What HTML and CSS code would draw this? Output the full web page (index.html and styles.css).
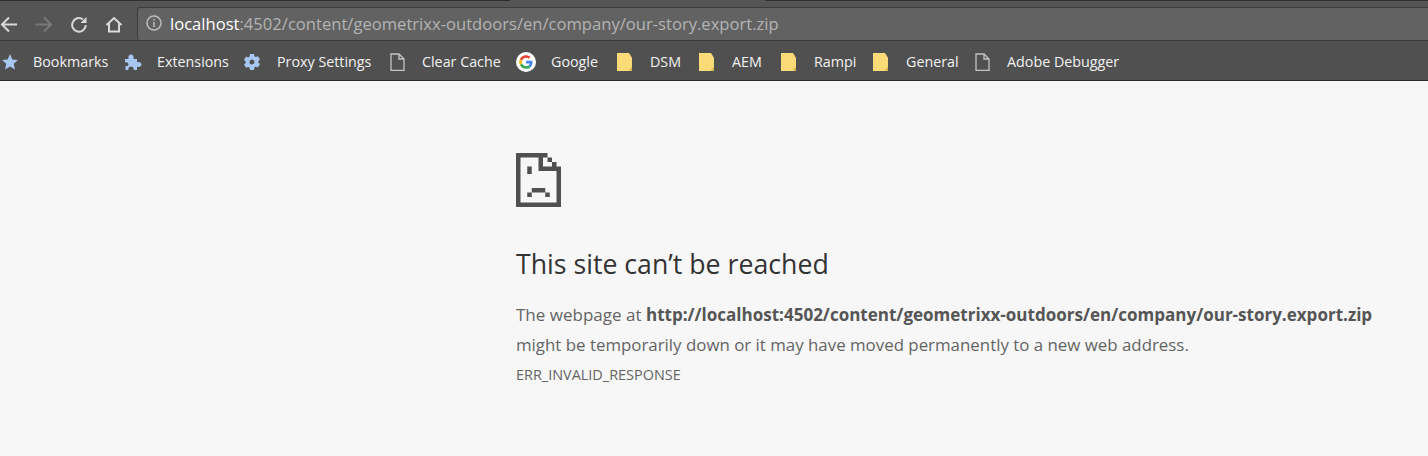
FILE: index.html
```html
<!DOCTYPE html>
<html lang="en">
<head>
<meta charset="utf-8">
<title>localhost</title>
<link rel="stylesheet" href="styles.css">
</head>
<body>
<header class="chrome">
  <div class="toolbar">
    <div class="nav">
      <svg class="nav-icon back" viewBox="0 0 18 18"><path d="M17 9.500H2M9 2.500L2 9.500l7 7"/></svg>
      <svg class="nav-icon forward" viewBox="0 0 18 18"><path d="M.5 9.500H15.500M9 2.500l7 7-7 7"/></svg>
      <svg class="nav-icon reload" viewBox="0 0 18 18"><path d="M15.800 10A6.800 6.800 0 1 1 13 4.400"/><path class="fill" d="M10.500 8H16.500V2z"/></svg>
      <svg class="nav-icon home" viewBox="0 0 18 18"><path d="M1.500 10L9 3l7.500 7M4 8v8.500h10V8"/></svg>
    </div>
    <div class="omnibox">
      <svg class="info" viewBox="0 0 16 16"><circle cx="8" cy="8" r="7"/><path d="M8 7v5M8 4v1.600"/></svg>
      <span class="url"><span class="host">localhost</span>:4502/content/geometrixx-outdoors/en/company/our-story.export.zip</span>
    </div>
  </div>
  <nav class="bookmarks">
    <a class="bm bm-star"><svg class="bm-icon" viewBox="0 0 18 18"><path class="blue" d="M9 1l2.300 5.400 5.700.5-4.300 3.800 1.300 5.800L9 13.500l-5 3 1.300-5.800L1 6.900l5.700-.5z"/></svg><span>Bookmarks</span></a>
    <a class="bm bm-ext"><svg class="bm-icon" viewBox="0 0 18 18"><path class="blue" d="M1 6h3.500C3.800 3 5.300 1.500 7 1.500S10.200 3 9.500 6H13v3.200c2.500-.8 4.500.5 4.500 2.300s-2 3.100-4.500 2.300V17H9.500c.7-2.300-.8-3.500-2.500-3.500S3.800 14.700 4.500 17H1.500v-4c2 .5 3-.5 3-1.800S3 8.800 1 9.500z"/></svg><span>Extensions</span></a>
    <a class="bm bm-gear"><svg class="bm-icon" viewBox="1 0 18 18"><path class="blue" fill-rule="evenodd" d="M7 1h4l.4 2.200 1.400.8 2.200-.8 2 3.400-1.700 1.400v1.600l1.700 1.400-2 3.400-2.200-.8-1.400.8L11 17H7l-.4-2.200-1.400-.8-2.200.8-2-3.400 1.700-1.400V8.400L1 7l2-3.400 2.200.8 1.400-.8zM9 6.500a2.500 2.500 0 1 0 0 5 2.500 2.500 0 0 0 0-5z"/></svg><span>Proxy Settings</span></a>
    <a class="bm bm-page1"><svg class="bm-icon" viewBox="0 0 18 18"><path class="sheet" d="M2 1h8l5 5v11.500H2zM10 1v5h5"/></svg><span>Clear Cache</span></a>
    <a class="bm bm-google"><svg class="bm-icon google" viewBox="0 0 20 20"><circle class="g-bg" cx="10" cy="10" r="10"/><path class="g-blue" d="M16.500 10.200c0-.5 0-1-.1-1.500H10v2.700h3.700c-.2.900-.7 1.600-1.400 2.100l2.200 1.700c1.300-1.200 2-3 2-5z"/><path class="g-green" d="M10 16.800c1.900 0 3.400-.6 4.500-1.600l-2.200-1.700c-.6.400-1.400.7-2.300.7-1.800 0-3.300-1.200-3.800-2.900l-2.300 1.800c1.100 2.200 3.400 3.700 6.100 3.700z"/><path class="g-yellow" d="M6.200 11.300c-.3-.9-.3-1.800 0-2.600L3.900 6.900c-1 1.900-1 4.300 0 6.200z"/><path class="g-red" d="M10 5.800c1 0 1.900.4 2.600 1l2-2C13.400 3.800 11.800 3.200 10 3.200c-2.700 0-5 1.500-6.100 3.700l2.300 1.800c.5-1.700 2-2.900 3.800-2.900z"/></svg><span>Google</span></a>
    <a class="bm bm-dsm"><svg class="bm-icon" viewBox="0 0 18 18"><path class="folder" d="M0 0h11c1 0 1.500.5 2 1.500L15 5v13H0z"/><path class="folder-fold" d="M12.500 18v-2.500H14V14h1v4z"/></svg><span>DSM</span></a>
    <a class="bm bm-aem"><svg class="bm-icon" viewBox="0 0 18 18"><path class="folder" d="M0 0h11c1 0 1.500.5 2 1.500L15 5v13H0z"/><path class="folder-fold" d="M12.500 18v-2.500H14V14h1v4z"/></svg><span>AEM</span></a>
    <a class="bm bm-rampi"><svg class="bm-icon" viewBox="0 0 18 18"><path class="folder" d="M0 0h11c1 0 1.500.5 2 1.500L15 5v13H0z"/><path class="folder-fold" d="M12.500 18v-2.500H14V14h1v4z"/></svg><span>Rampi</span></a>
    <a class="bm bm-general"><svg class="bm-icon" viewBox="0 0 18 18"><path class="folder" d="M0 0h11c1 0 1.500.5 2 1.500L15 5v13H0z"/><path class="folder-fold" d="M12.500 18v-2.500H14V14h1v4z"/></svg><span>General</span></a>
    <a class="bm bm-page2"><svg class="bm-icon" viewBox="0 0 18 18"><path class="sheet" d="M2 1h8l5 5v11.500H2zM10 1v5h5"/></svg><span>Adobe Debugger</span></a>
  </nav>
</header>
<main class="content">
  <div class="error">
    <svg class="sad" viewBox="0 0 45 54">
      <path d="M0 0h31.500v4.500H36V9h4.500v4.500H45V54H0zM4.500 4.500v45h36V18H22.500V4.500zM27 4.500v9h9V9h-4.500V4.500z" fill-rule="evenodd"/>
      <path d="M11.250 13.500h4.500v7.500h-4.500zM15.750 35h13.500v4.500h-13.500zM11.250 39.500h4.500V44h-4.500zM29.250 39.500h4.500V44h-4.500z"/>
    </svg>
    <h1>This site can’t be reached</h1>
    <p class="desc"><span class="line">The webpage at <strong>http://localhost:4502/content/geometrixx-outdoors/en/company/our-story.export.zip</strong></span><span class="line second">might be temporarily down or it may have moved permanently to a new web address.</span></p>
    <div class="code">ERR_INVALID_RESPONSE</div>
  </div>
</main>
</body>
</html>
```

FILE: styles.css
```css
* { box-sizing: border-box; }
html, body { margin: 0; padding: 0; }
body {
  width: 1428px;
  height: 456px;
  overflow: hidden;
  background: #f7f7f7;
  font-family: "Open Sans", "Noto Sans", sans-serif;
}
.chrome { background: #505050; border-bottom: 1px solid #2b2b2b; height: 81px; }
.toolbar {
  height: 41px;
  display: flex;
  padding-top: 7px;
  border-bottom: 1px solid #3a3a3a;
  background-color: #555;
  background-image: linear-gradient(to right, #2f2f2f 510px, #555 510px, #555 765px, #2f2f2f 765px);
  background-size: 100% 1px;
  background-repeat: no-repeat;
}
.nav { width: 137px; display: flex; align-items: center; gap: 17px; height: 34px; }
.nav-icon { width: 18px; height: 18px; flex: none; fill: none; stroke: #d9d9d9; stroke-width: 2; }
.nav-icon .fill { fill: #d9d9d9; stroke: none; }
.nav-icon.forward { stroke: #787878; }
.omnibox {
  flex: 1;
  height: 33px;
  background: #626262;
  border: 1px solid #3d3d3d;
  border-right: 0;
  border-bottom: 0;
  border-radius: 3px 0 0 3px;
  display: flex;
  align-items: center;
  padding: 0 0 2px 8px;
  font-size: 16.600px;
  color: #b4b4b4;
  white-space: nowrap;
}
.info { width: 16px; height: 16px; fill: none; stroke: #bdbdbd; stroke-width: 1.500; margin-right: 8px; }
.host { color: #fff; }
.bookmarks {
  height: 39px;
  display: flex;
  align-items: center;
  padding-top: 2px;
  font-size: 14.300px;
  color: #f2f2f2;
  white-space: nowrap;
}
.bm { display: flex; align-items: center; }
.bm-icon { width: 18px; height: 18px; flex: none; margin-right: 15px; }
.bm-star { padding-left: 1px; width: 124px; }
.bm-star .bm-icon { margin-right: 14px; }
.bm-ext { width: 120px; }
.bm-gear { width: 145px; }
.bm-page1 { width: 127px; }
.bm-google { width: 101px; }
.bm-dsm { width: 82px; }
.bm-aem { width: 82px; }
.bm-rampi { width: 92px; }
.bm-general { width: 101px; }
.blue { fill: #a8c7f0; }
.sheet { fill: none; stroke: #c4c4c4; stroke-width: 1.300; }
.folder { fill: #fbdb78; }
.folder-fold { fill: #dcb64c; }
.google { width: 20px; height: 20px; }
.g-bg { fill: #fff; }
.g-blue { fill: #4285f4; }
.g-green { fill: #34a853; }
.g-yellow { fill: #fbbc05; }
.g-red { fill: #ea4335; }
.error { padding: 72px 0 0 516px; color: #646464; }
.sad { display: block; width: 45px; height: 54px; fill: #505050; }
h1 { margin: 39px 0 0; font-size: 26.700px; font-weight: 400; line-height: 36px; color: #333; }
.desc { margin: 18px 0 0; font-size: 17.020px; line-height: 30px; white-space: nowrap; }
.line { display: block; }
.line.second { font-size: 16.880px; }
.desc strong { font-weight: 700; color: #555; }
.code { font-size: 14.450px; line-height: 20px; margin-top: 5px; color: #646464; }
```
